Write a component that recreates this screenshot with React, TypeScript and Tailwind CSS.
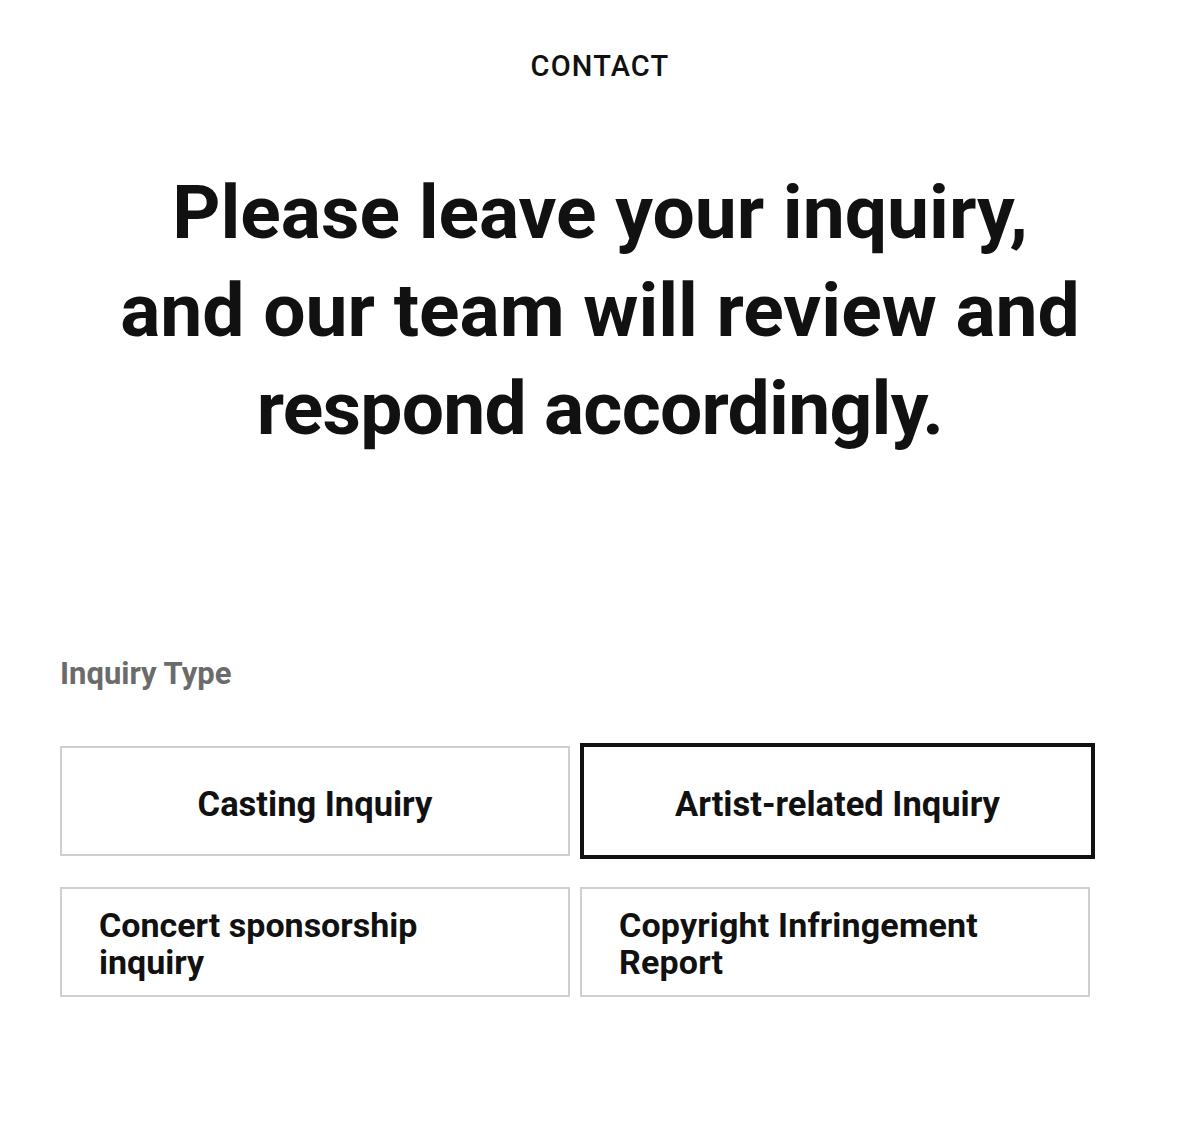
export default function App() {
  return (
    <div className="min-h-[1129px] bg-white pt-[49px] text-[#111111] font-['Roboto',_'Liberation_Sans',_sans-serif]">
      <div className="text-center text-[29px] leading-[35px] font-medium tracking-[0.04em]">CONTACT</div>
      <h1 className="mt-[79px] text-center text-[75px] leading-[98px] font-bold">
        Please leave your inquiry,
        <br />
        and our team will review and
        <br />
        <span className="tracking-[-0.01em]">respond accordingly.</span>
      </h1>
      <div className="ml-[60px] w-[1030px] mt-[199px]">
        <div className="text-[31px] leading-[36px] font-bold text-[#6b6b6b]">Inquiry Type</div>
        <div className="mt-[54px] grid grid-cols-2 gap-x-[10px] gap-y-[31px]">
          <button className="h-[110px] border-2 border-[#cfcfcf] bg-white pt-[6px] text-center text-[34.5px] font-bold leading-[36px]">
            Casting Inquiry
          </button>
          <button className="-mt-[3px] -mb-[3px] -mr-[5px] h-[116px] border-4 border-[#111111] bg-white pt-[6px] text-center text-[34.5px] font-bold leading-[36px]">
            Artist-related Inquiry
          </button>
          <button className="h-[110px] border-2 border-[#cfcfcf] bg-white pl-[37px] pr-[20px] pt-[4px] text-left text-[34px] font-bold leading-[37px]">
            Concert sponsorship
            <br />
            inquiry
          </button>
          <button className="h-[110px] border-2 border-[#cfcfcf] bg-white pl-[37px] pr-[20px] pt-[4px] text-left text-[34px] font-bold leading-[37px] tracking-[0.005em]">
            Copyright Infringement
            <br />
            Report
          </button>
        </div>
      </div>
    </div>
  );
}
